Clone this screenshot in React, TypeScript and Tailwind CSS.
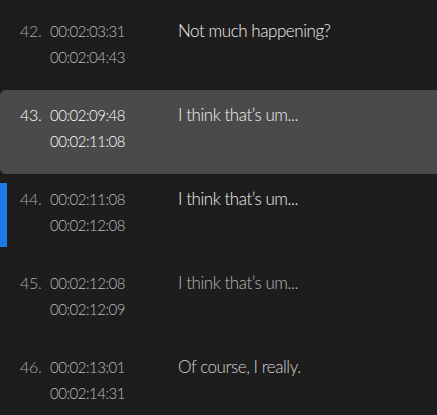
import React from "react";

type Row = { n: number; a: string; b: string; t: string; active?: boolean; marker?: boolean; tc: string };

const rows: Row[] = [
  { n: 42, a: "00:02:03:31", b: "00:02:04:43", t: "Not much happening?", tc: "text-[#f0f0f0]" },
  { n: 43, a: "00:02:09:48", b: "00:02:11:08", t: "I think that’s um...", active: true, tc: "text-[#f2f2f2]" },
  { n: 44, a: "00:02:11:08", b: "00:02:12:08", t: "I think that’s um...", marker: true, tc: "text-[#f0f0f0]" },
  { n: 45, a: "00:02:12:08", b: "00:02:12:09", t: "I think that’s um...", tc: "text-[#b8b8b8]" },
  { n: 46, a: "00:02:13:01", b: "00:02:14:31", t: "Of course, I really.", tc: "text-[#d2d2d2]" },
];

export default function App() {
  return (
    <div
      className="w-[437px] h-[415px] overflow-hidden bg-[#1d1d1d] pt-[6px]"
      style={{ fontFamily: "Lato, 'Noto Sans', sans-serif" }}
    >
      {rows.map((r) => (
        <div
          key={r.n}
          className={`relative flex h-[84px] pt-[12px] ${r.active ? "bg-[#4a4a4a] rounded-l-[6px] -mr-[10px]" : ""}`}
        >
          {r.marker && <div className="absolute left-0 top-[9px] h-[64px] w-[7px] bg-[#1b7ce8]" />}
          <div
            className={`w-[50px] pl-[20px] text-[16px] font-light leading-[26px] tracking-[-0.3px] ${r.active ? "text-[#ffffff]" : "text-[#ababab]"}`}
          >
            {r.n}.
          </div>
          <div
            className={`w-[128px] text-[15px] font-light leading-[26px] tracking-[-0.5px] ${r.active ? "text-[#ffffff]" : "text-[#bcbcbc]"}`}
          >
            <div>{r.a}</div>
            <div>{r.b}</div>
          </div>
          <div className={`text-[17px] font-light leading-[26px] tracking-[-0.45px] ${r.tc}`}>{r.t}</div>
        </div>
      ))}
    </div>
  );
}
